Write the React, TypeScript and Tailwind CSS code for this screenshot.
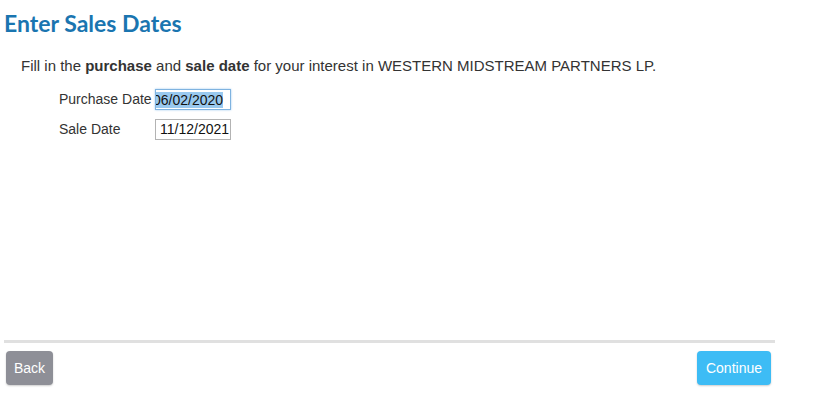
import React from "react";

export default function App() {
    return (
        <div className="w-[831px] h-[404px] bg-white relative font-['Liberation_Sans',Arial,sans-serif] text-[#333]">
            <div className="w-[775px] pl-[4px] flex flex-col h-full">
                {/* Heading */}
                <h1 className="pt-[10px] text-[23px] leading-[26px] font-bold text-[#1a75b0] font-['Lato',sans-serif]">
                    Enter Sales Dates
                </h1>

                <p className="mt-[21px] pl-[17px] text-[15px] leading-[18px]">
                    Fill in the <b>purchase</b> and <b>sale date</b> for your interest in WESTERN MIDSTREAM PARTNERS LP.
                </p>

                {/* Date fields */}
                <div className="mt-[14px] pl-[55px] flex flex-col gap-[9px] text-[14px]">
                    <div className="flex items-center">
                        <span className="w-[96px]">Purchase Date</span>
                        <div className="w-[76px] h-[21px] border border-[#7fb3e0] shadow-[0_0_2px_#9ecaf0] overflow-hidden flex items-center bg-white">
                            <span className="whitespace-nowrap -ml-[3px] bg-[#99c9ef] text-[#111] leading-[16px]">06/02/2020</span>
                        </div>
                    </div>
                    <div className="flex items-center">
                        <span className="w-[96px]">Sale Date</span>
                        <div className="w-[76px] h-[21px] border border-[#b3b3b3] flex items-center pl-[4px] bg-white text-[#111]">
                            11/12/2021
                        </div>
                    </div>
                </div>

                <div className="flex-1" />

                {/* Footer */}
                <div className="border-t-[3px] border-[#e0e0e0] mb-[19px]">
                    <div className="flex justify-between pt-[8px] pl-[2px] pr-[4px]">
                        <button className="h-[34px] px-[8px] rounded-[4px] bg-[#8e8f97] text-white text-[14px] shadow-[0_1px_2px_rgba(0,0,0,0.2)]">
                            Back
                        </button>
                        <button className="h-[34px] px-[9px] rounded-[4px] bg-[#3dbcf5] text-white text-[14px] shadow-[0_1px_2px_rgba(0,0,0,0.2)]">
                            Continue
                        </button>
                    </div>
                </div>
            </div>
        </div>
    );
}
